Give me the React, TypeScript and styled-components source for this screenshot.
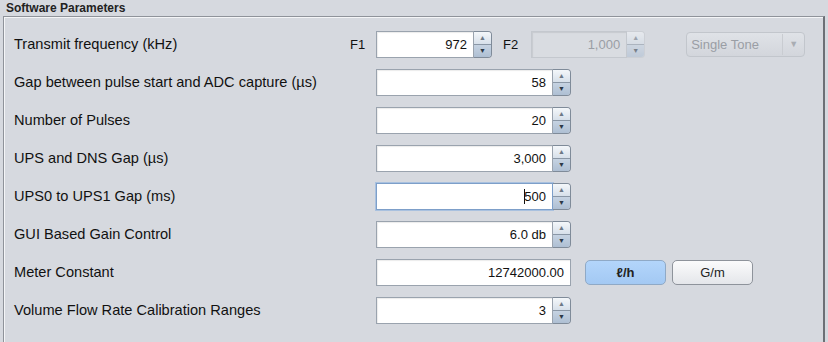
import styled, { createGlobalStyle } from 'styled-components';

const Global = createGlobalStyle`
    html, body {
        margin: 0;
        padding: 0;
        background: #d6d9df;
    }
    body {
        font-family: "Liberation Sans", Arial, sans-serif;
        color: #111;
    }
`;

const Panel = styled.div`
    width: 828px;
    height: 342px;
    background: #d6d9df;
    box-sizing: border-box;
    overflow: hidden;
`;

const Title = styled.div`
    height: 16px;
    padding-left: 6px;
    font-size: 12px;
    font-weight: bold;
    line-height: 16px;
    color: #222;
`;

const Box = styled.div`
    margin-left: 3px;
    width: 822px;
    height: 330px;
    box-sizing: border-box;
    border-top: 1px solid #8f939a;
    border-left: 1px solid #8f939a;
    border-right: 2px solid #6d7076;
    box-shadow: inset 1px 1px 0 #f4f5f7;
    padding-top: 8px;
`;

const Row = styled.div`
    display: grid;
    grid-template-columns: 326px 36px auto;
    align-items: center;
    height: 38px;
    padding-left: 10px;
`;

const Label = styled.div`
    font-size: 14.6px;
`;

const Tag = styled.div<{ $pad?: number }>`
    font-size: 13px;
    padding-left: ${p => p.$pad ?? 0}px;
`;

const Controls = styled.div`
    display: flex;
    align-items: center;
`;

const Spinner = styled.div`
    display: flex;
    height: 27px;
`;

const Field = styled.div<{ $w: number; $disabled?: boolean; $focus?: boolean }>`
    width: ${p => p.$w}px;
    height: 27px;
    box-sizing: border-box;
    background: ${p => (p.$disabled ? '#d9dce1' : '#fff')};
    color: ${p => (p.$disabled ? '#9a9ea5' : '#111')};
    border: 1px solid ${p => (p.$focus ? '#7d9fc9' : p.$disabled ? '#c4c8ce' : '#9aa3ae')};
    box-shadow: ${p => (p.$focus ? '0 0 0 1px #a9c1df' : 'inset 1px 1px 1px rgba(0,0,0,0.08)')};
    font-size: 13px;
    display: flex;
    align-items: center;
    justify-content: flex-end;
    padding-right: 6px;
`;

const Caret = styled.span`
    display: inline-block;
    width: 1px;
    height: 15px;
    background: #111;
    margin-right: -1px;
`;

const Arrows = styled.div<{ $disabled?: boolean }>`
    width: 18px;
    height: 27px;
    box-sizing: border-box;
    display: flex;
    flex-direction: column;
    border: 1px solid ${p => (p.$disabled ? '#c4c8ce' : '#7f8b99')};
    border-left: none;
    border-radius: 0 4px 4px 0;
    overflow: hidden;
    opacity: ${p => (p.$disabled ? 0.55 : 1)};
`;

const Arrow = styled.div<{ $down?: boolean }>`
    flex: 1;
    display: flex;
    align-items: center;
    justify-content: center;
    font-size: 7px;
    color: ${p => (p.$down ? '#2c3846' : '#6d7886')};
    background: ${p =>
        p.$down
            ? 'linear-gradient(#c6d3e2, #aebfd3)'
            : 'linear-gradient(#f4f7fa, #d7e0ea)'};
    border-top: ${p => (p.$down ? '1px solid #8a97a6' : 'none')};
`;

const Combo = styled.div`
    margin-left: 41px;
    width: 119px;
    height: 25px;
    box-sizing: border-box;
    border: 1px solid #c2c6cc;
    border-radius: 4px;
    background: linear-gradient(#dfe2e7, #d3d6dc);
    color: #9a9ea5;
    font-size: 13px;
    display: flex;
    align-items: center;
    justify-content: space-between;
    padding: 0 6px 0 4px;
`;

const ComboArrow = styled.span`
    font-size: 9px;
    color: #a9adb3;
    border-left: 1px solid #c9ccd1;
    padding-left: 6px;
    line-height: 21px;
`;

const UnitButton = styled.div<{ $active?: boolean }>`
    width: 81px;
    height: 25px;
    box-sizing: border-box;
    margin-left: ${p => (p.$active ? 14 : 6)}px;
    border: 1px solid ${p => (p.$active ? '#8fa9c6' : '#8e939b')};
    border-radius: 5px;
    background: ${p =>
        p.$active
            ? 'linear-gradient(#b3d5fb, #a3c9f3)'
            : 'linear-gradient(#fbfbfc, #e4e6ea)'};
    font-size: 13px;
    font-weight: ${p => (p.$active ? 'bold' : 'normal')};
    display: flex;
    align-items: center;
    justify-content: center;
    color: #222;
`;

const Gap = styled.div<{ $w: number }>`
    width: ${p => p.$w}px;
`;

function Spin({ value, w, disabled, focus }: { value: string; w: number; disabled?: boolean; focus?: boolean }) {
    return (
        <Spinner>
            <Field $w={w} $disabled={disabled} $focus={focus}>
                {focus && <Caret />}
                {value}
            </Field>
            <Arrows $disabled={disabled}>
                <Arrow>▲</Arrow>
                <Arrow $down>▼</Arrow>
            </Arrows>
        </Spinner>
    );
}

const simple = [
    { label: 'Gap between pulse start and ADC capture (µs)', value: '58' },
    { label: 'Number of Pulses', value: '20' },
    { label: 'UPS and DNS Gap (µs)', value: '3,000' },
    { label: 'UPS0 to UPS1 Gap (ms)', value: '500', focus: true },
    { label: 'GUI Based Gain Control', value: '6.0 db' },
];

export default function App() {
    return (
        <Panel>
            <Global />
            <Title>Software Parameters</Title>
            <Box>
                <Row>
                    <Label>Transmit frequency (kHz)</Label>
                    <Tag $pad={10}>F1</Tag>
                    <Controls>
                        <Spin value="972" w={98} />
                        <Gap $w={11} />
                        <Tag>F2</Tag>
                        <Gap $w={13} />
                        <Spin value="1,000" w={96} disabled />
                        <Combo>
                            Single Tone
                            <ComboArrow>▼</ComboArrow>
                        </Combo>
                    </Controls>
                </Row>
                {simple.map(r => (
                    <Row key={r.label}>
                        <Label>{r.label}</Label>
                        <span />
                        <Controls>
                            <Spin value={r.value} w={177} focus={r.focus} />
                        </Controls>
                    </Row>
                ))}
                <Row>
                    <Label>Meter Constant</Label>
                    <span />
                    <Controls>
                        <Field $w={195}>12742000.00</Field>
                        <UnitButton $active>ℓ/h</UnitButton>
                        <UnitButton>G/m</UnitButton>
                    </Controls>
                </Row>
                <Row>
                    <Label>Volume Flow Rate Calibration Ranges</Label>
                    <span />
                    <Controls>
                        <Spin value="3" w={177} />
                    </Controls>
                </Row>
            </Box>
        </Panel>
    );
}
